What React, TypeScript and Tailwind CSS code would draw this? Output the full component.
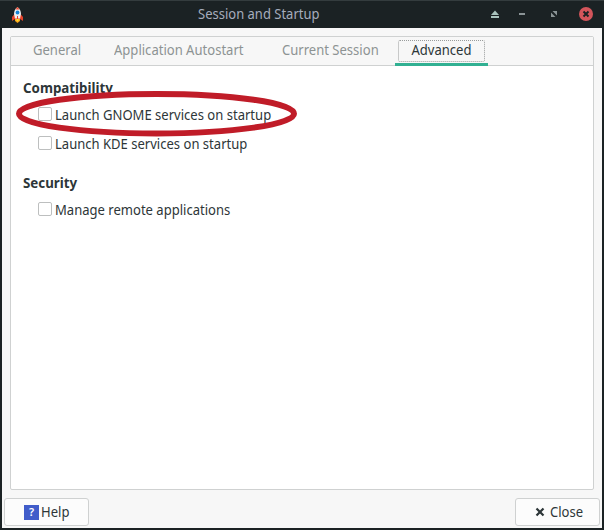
import React from 'react';

interface TextProps {
  children: React.ReactNode;
}

interface OptionProps {
  label: string;
}

const tabs = [
  { label: 'General', className: 'ml-[22px] w-[50px]' },
  { label: 'Application Autostart', className: 'ml-[31px] w-[131px]' },
  { label: 'Current Session', className: 'ml-[37px] w-[98px]' },
];

// slightly tall, narrow lettering of the desktop font
const Text: React.FC<TextProps> = ({ children }) => (
  <span className="inline-block origin-[50%_75%] scale-y-[1.08] whitespace-nowrap">{children}</span>
);

const RocketIcon: React.FC = () => (
  <svg className="ml-[11px] h-4 w-[13px]" viewBox="0 0 13 16">
    <path d="M4 6.500 1 10v4l3-2h5l3 2v-4L9 6.500Z" fill="#e8432a" />
    <path d="M6.500 0C4 2 3 4.500 3 7l1 4.500h5L10 7C10 4.500 9 2 6.500 0Z" fill="#eceff1" />
    <path d="M6.500 0 4.500 2.500h4Z" fill="#e8432a" />
    <circle cx="6.500" cy="5.500" r="1.900" fill="#1686d9" />
    <path d="M6 9h1v3H6Z" fill="#e8432a" />
    <path d="M4 12h5v2l-2.500 2L4 14Z" fill="#f9a51a" />
    <path d="M5.500 12h2v1.500l-1 1-1-1Z" fill="#ffe135" />
  </svg>
);

const WindowControls: React.FC = () => (
  <svg className="h-[27px] w-[120px]" viewBox="0 0 120 27">
    <path d="M11 14 15 9.500 19 14Z" fill="#a9c3bd" />
    <path d="M11 15h8v2h-8Z" fill="#a9c3bd" />
    <path d="M39 12h6v2h-6Z" fill="#8b9496" />
    <path d="M72.500 10H77v4.500ZM71 11.500V16h4.500Z" fill="#8b9496" />
    <circle cx="106" cy="13" r="7" fill="#d3555b" />
    <path d="m103.500 10.500 5 5m0-5-5 5" stroke="#1b2224" strokeWidth="2" />
  </svg>
);

const Option: React.FC<OptionProps> = ({ label }) => (
  <label className="flex h-5 items-center">
    <input
      type="checkbox"
      className="mr-[3px] mb-[2px] h-[14px] w-[14px] appearance-none rounded-[2px] border border-[#bdbfbf] bg-white"
    />
    <Text>{label}</Text>
  </label>
);

const App: React.FC = () => {
  return (
    <div className="flex h-[530px] w-[604px] flex-col bg-[#1b2224] font-['Noto_Sans',sans-serif] text-[13.05px] leading-5 text-[#2d3638]">
      <header className="flex h-7 items-center border-t border-[#343c3e]">
        <RocketIcon />
        <h1 className="mb-[2px] ml-[174px] text-[13px] leading-5 text-[#a6adbd]">
          <Text>Session and Startup</Text>
        </h1>
        <div className="ml-auto mr-[4px]">
          <WindowControls />
        </div>
      </header>

      <main className="relative mx-[2px] mb-[2px] flex flex-1 flex-col bg-[#f7f7f7] pt-2">
        <section className="mx-2 flex h-[454px] flex-col rounded-[2px] border border-[#cfd1d1] bg-white">
          <nav className="flex h-[29px] border-b border-[#cfd1d1] bg-[#f7f7f7] text-[#8d9393]">
            {tabs.map((tab) => (
              <button key={tab.label} className={`${tab.className} mt-[3px] h-5 text-left`}>
                <Text>{tab.label}</Text>
              </button>
            ))}
            <button className="ml-[15px] h-[29px] w-[93px] border-b-[3px] border-[#31b092] px-[3px] pt-[3px] pb-px text-[#2d3638]">
              <span className="block h-[22px] rounded-[2px] border border-dotted border-[#999c9c] leading-[18px]">
                <Text>Advanced</Text>
              </span>
            </button>
          </nav>

          <div className="px-3 pt-3">
            <h2 className="text-[13.333px] leading-5 font-bold">Compatibility</h2>
            <div className="ml-[15px] mt-[7px]">
              <Option label="Launch GNOME services on startup" />
            </div>
            <div className="ml-[15px] mt-[9px]">
              <Option label="Launch KDE services on startup" />
            </div>
            <h2 className="mt-[19px] text-[13.333px] leading-5 font-bold">Security</h2>
            <div className="ml-[15px] mt-[7px]">
              <Option label="Manage remote applications" />
            </div>
          </div>
        </section>

        <svg className="absolute left-[14px] top-[63px] h-[46px] w-[282px]" viewBox="0 0 282 46" fill="none">
          <ellipse cx="140.500" cy="22.700" rx="137.500" ry="19.700" stroke="#c01c28" strokeWidth="6" />
        </svg>

        <footer className="mx-[2px] mt-2 flex justify-between">
          <button className="flex h-7 w-[85px] items-center rounded-[3px] border border-[#cfd1d1] bg-[#fcfcfc] pl-[19px]">
            <span className="mr-[2px] flex h-[15px] w-[15px] items-center justify-center bg-[#415dca] text-[11px] font-semibold text-white">
              ?
            </span>
            <Text>Help</Text>
          </button>
          <button className="flex h-7 w-[85px] items-center rounded-[3px] border border-[#cfd1d1] bg-[#fcfcfc] pl-[19px]">
            <svg className="mr-[5px] h-[10px] w-[10px]" viewBox="0 0 10 10">
              <path d="m1.500 1.500 7 7m0-7-7 7" stroke="#2d3638" strokeWidth="2.200" />
            </svg>
            <Text>Close</Text>
          </button>
        </footer>
      </main>
    </div>
  );
};

export default App;
